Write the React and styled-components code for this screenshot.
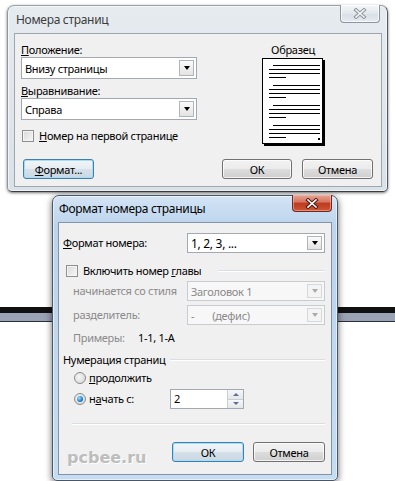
import styled, { createGlobalStyle, css } from "styled-components";

const GlobalStyle = createGlobalStyle`
  html, body {
    margin: 0;
    padding: 0;
    background: #fff;
  }
  body {
    font-family: "Noto Sans", "Open Sans", sans-serif;
    font-size: 11px;
    letter-spacing: -0.3px;
    color: #000;
  }
`;

const Page = styled.div`
  width: 395px;
  height: 481px;
  padding-top: 5px;
  box-sizing: border-box;
  overflow: hidden;
`;

const Lower = styled.div`
  padding-top: 3px;
  background: linear-gradient(
    to bottom,
    transparent 115px,
    #111 115px,
    #111 121px,
    #9aa2b6 121px,
    #9aa2b6 129px,
    #2c2f36 129px,
    #2c2f36 130px,
    transparent 130px
  );
`;

const Window = styled.div`
  box-sizing: border-box;
  width: ${(p) => p.$width}px;
  margin-left: ${(p) => p.$left}px;
  border: 1px solid;
  border-radius: 7px 7px 5px 5px;
  ${(p) =>
    p.$active
      ? css`
          border-color: #4a5766;
          background: linear-gradient(#d3e4f5, #bcd4ec 30px, #c6dcf1);
          box-shadow: inset 0 0 0 1px rgba(255, 255, 255, 0.55),
            0 2px 7px rgba(0, 0, 0, 0.6);
          padding: 0 5px 5px 5px;
        `
      : css`
          border-color: #9aa1a9 #55595e #3a3c40 #8e959c;
          background: linear-gradient(#e6ebf0, #dae1e8);
          box-shadow: inset 0 0 0 1px rgba(255, 255, 255, 0.6),
            0 1px 3px rgba(0, 0, 0, 0.55);
          padding: 0 5px 4px 6px;
        `}
`;

const TitleBar = styled.div`
  display: flex;
  justify-content: space-between;
  align-items: ${(p) => (p.$active ? "center" : "flex-start")};
  height: ${(p) => (p.$active ? 26 : 27)}px;
`;

const Title = styled.span`
  padding-left: ${(p) => (p.$active ? 1 : 2)}px;
  padding-top: ${(p) => (p.$active ? 0 : 6)}px;
  font-size: 12px;
  line-height: 16px;
  color: ${(p) => (p.$active ? "#000" : "#3c3c3c")};
`;

const CloseButton = styled.div`
  align-self: flex-start;
  box-sizing: border-box;
  width: 40px;
  height: ${(p) => (p.$active ? 17 : 18)}px;
  margin-top: -1px;
  margin-right: ${(p) => (p.$active ? 0 : 2)}px;
  border-radius: 0 0 4px 4px;
  display: flex;
  align-items: center;
  justify-content: center;
  ${(p) =>
    p.$active
      ? css`
          border: 1px solid #6d2a22;
          border-top: none;
          background: linear-gradient(#e8a493, #d5735d 45%, #bd3a1e 50%, #cc5534 100%);
          box-shadow: inset 0 0 0 1px rgba(255, 200, 180, 0.5);
        `
      : css`
          border: 1px solid #8d959e;
          border-top: none;
          background: linear-gradient(#f4f6f8, #e3e8ed 50%, #d8dee5 51%, #e6ebf0);
          box-shadow: inset 0 0 0 1px rgba(255, 255, 255, 0.7);
        `}
`;

const Client = styled.div`
  background: #f0f0f0;
  border: 1px solid ${(p) => (p.$active ? "#8194a9" : "#9ea6ae")};
  padding: ${(p) => p.$pad};
`;

/* ---------- common controls ---------- */

const U = styled.span`
  text-decoration: underline;
  text-underline-offset: 1px;
`;

const Label = styled.span`
  display: block;
  line-height: 14px;
  white-space: nowrap;
  color: ${(p) => (p.$disabled ? "#8a8a8a" : "#000")};
`;

const Select = styled.div`
  box-sizing: border-box;
  display: flex;
  align-items: center;
  height: ${(p) => p.$h}px;
  padding-left: 3px;
  border: 1px solid ${(p) => (p.$disabled ? "#c8ccd1" : "#a3a9b0")};
  background: ${(p) => (p.$disabled ? "#f7f7f7" : "#fff")};
  color: ${(p) => (p.$disabled ? "#8a8a8a" : "#000")};
`;

const SelectText = styled.span`
  flex: 1;
  white-space: pre;
  font-size: ${(p) => p.$size || 11}px;
`;

const DropButton = styled.span`
  box-sizing: border-box;
  width: 15px;
  align-self: stretch;
  margin: 2px 2px 2px 0;
  border: 1px solid ${(p) => (p.$disabled ? "#d6d9dc" : "#b0b5ba")};
  background: ${(p) =>
    p.$disabled ? "#f4f4f4" : "linear-gradient(#fbfbfb, #e3e3e3)"};
  display: flex;
  align-items: center;
  justify-content: center;
  &::after {
    content: "";
    border-left: 3.5px solid transparent;
    border-right: 3.5px solid transparent;
    border-top: 4px solid ${(p) => (p.$disabled ? "#a9a9a9" : "#000")};
  }
`;

const CheckRow = styled.div`
  display: flex;
  align-items: center;
  gap: ${(p) => p.$gap}px;
  height: 14px;
  margin-top: ${(p) => p.$mt}px;
  padding-left: ${(p) => p.$indent}px;
`;

const CheckBox = styled.span`
  box-sizing: border-box;
  flex: none;
  width: 12px;
  height: 12px;
  border: 1px solid #8e8f8f;
  background: linear-gradient(135deg, #d9d9d9, #f7f7f7);
  box-shadow: inset 0 0 0 1px #f4f4f4;
`;

const Radio = styled.span`
  box-sizing: border-box;
  flex: none;
  width: 12px;
  height: 12px;
  border-radius: 50%;
  border: 1px solid #8b8b8b;
  background: radial-gradient(circle at 40% 40%, #f6f6f6, #d3d3d3);
  display: flex;
  align-items: center;
  justify-content: center;
  &::after {
    content: "";
    display: ${(p) => (p.$checked ? "block" : "none")};
    width: 6px;
    height: 6px;
    border-radius: 50%;
    background: radial-gradient(circle at 35% 35%, #9fe0ff, #1b7fd0 60%, #0a4d8f);
  }
`;

const Button = styled.div`
  box-sizing: border-box;
  width: ${(p) => p.$w}px;
  height: 20px;
  border-radius: 3px;
  display: flex;
  align-items: center;
  justify-content: center;
  color: #000;
  ${(p) =>
    p.$focus
      ? css`
          border: 1px solid #3c7fb1;
          background: linear-gradient(#f0f5f8, #e6edf2 50%, #d6e1e9 51%, #cad8e3);
          box-shadow: inset 0 0 0 1px #a8dcf6;
        `
      : css`
          border: 1px solid #707070;
          background: linear-gradient(#f2f2f2, #ebebeb 50%, #dddddd 51%, #cfcfcf);
          box-shadow: inset 0 0 0 1px rgba(255, 255, 255, 0.75);
        `}
`;

const EtchedLine = styled.span`
  flex: 1;
  height: 0;
  border-top: 1px solid #d5dfe5;
  border-bottom: 1px solid #fff;
`;

/* ---------- dialog 1 ---------- */

const Top = styled.div`
  display: flex;
`;

const LeftCol = styled.div`
  width: 176px;
`;

const FieldLabel = styled(Label)`
  margin-top: ${(p) => p.$mt || 0}px;
`;

const SampleCol = styled.div`
  width: 80px;
  margin-left: 56px;
  display: flex;
  flex-direction: column;
  align-items: center;
`;

const ButtonRow = styled.div`
  display: flex;
  align-items: center;
  justify-content: space-between;
  margin-top: ${(p) => p.$mt}px;
`;

const ButtonGroup = styled.div`
  display: flex;
  gap: ${(p) => p.$gap}px;
`;

/* ---------- dialog 2 ---------- */

const FieldRow = styled.div`
  display: grid;
  grid-template-columns: ${(p) => p.$label}px 1fr;
  align-items: center;
  margin-top: ${(p) => p.$mt}px;
  padding-left: ${(p) => p.$indent || 0}px;
`;

const HeadRow = styled.div`
  display: flex;
  align-items: center;
  gap: 5px;
  height: 14px;
  margin-top: ${(p) => p.$mt}px;
`;

const RadioRow = styled.div`
  display: grid;
  grid-template-columns: 96px auto;
  align-items: center;
  margin-top: ${(p) => p.$mt}px;
  padding-left: 11px;
  min-height: 14px;
`;

const RadioLabel = styled.div`
  display: flex;
  align-items: center;
  gap: 3px;
`;

const Spin = styled.div`
  box-sizing: border-box;
  width: 74px;
  height: 20px;
  display: flex;
  border: 1px solid #a3a9b0;
  background: #fff;
`;

const SpinValue = styled.span`
  flex: 1;
  padding-left: 3px;
  line-height: 18px;
`;

const SpinButtons = styled.div`
  width: 15px;
  display: flex;
  flex-direction: column;
  border-left: 1px solid #c9ced3;
`;

const SpinButton = styled.span`
  flex: 1;
  display: flex;
  align-items: center;
  justify-content: center;
  background: linear-gradient(#f6f7f8, #e4e7ea);
  & + & {
    border-top: 1px solid #c9ced3;
  }
  &::after {
    content: "";
    border-left: 3px solid transparent;
    border-right: 3px solid transparent;
    ${(p) =>
      p.$up
        ? "border-bottom: 3px solid #5b6f93;"
        : "border-top: 3px solid #5b6f93;"}
  }
`;

const Divider = styled.div`
  margin: 14px 0 0 9px;
  height: 0;
  border-top: 1px solid #d5dfe5;
  border-bottom: 1px solid #fff;
`;

const Watermark = styled.span`
  padding-left: 4px;
  font-family: "DejaVu Sans", "Noto Sans", sans-serif;
  font-weight: bold;
  font-size: 16px;
  letter-spacing: 0;
  line-height: 18px;
  margin-top: 12px;
  color: #bdbdbd;
  text-shadow: 1px 1px 0 #fff;
`;

const CloseGlyph = ({ active }) => (
  <svg width="14" height="11" viewBox="0 0 14 11">
    <path
      d="M3 2 L11 9 M11 2 L3 9"
      stroke={active ? "#4a1810" : "#8c949c"}
      strokeWidth="3.6"
      strokeLinecap="square"
    />
    <path
      d="M3 2 L11 9 M11 2 L3 9"
      stroke={active ? "#fff" : "#f3f5f7"}
      strokeWidth="1.6"
      strokeLinecap="square"
    />
  </svg>
);

const SamplePage = () => {
  const groups = [7, 27, 47, 67];
  return (
    <svg width="63" height="88" viewBox="0 0 63 88" style={{ marginTop: 1 }}>
      <rect x="2" y="2" width="61" height="86" fill="#000" />
      <rect x="0.5" y="0.5" width="60" height="85" fill="#fff" stroke="#000" />
      {groups.map((g) => (
        <g key={g} stroke="#000" strokeWidth="1">
          <line x1="11" x2="58" y1={g + 0.5} y2={g + 0.5} />
          <line x1="7" x2="58" y1={g + 4.5} y2={g + 4.5} />
          <line x1="7" x2="58" y1={g + 8.5} y2={g + 8.5} />
          <line x1="7" x2="24" y1={g + 12.5} y2={g + 12.5} />
        </g>
      ))}
      <rect x="56" y="80" width="2" height="2" fill="#000" />
    </svg>
  );
};

export default function App() {
  return (
    <>
      <GlobalStyle />
      <Page>
        <Window $width={381} $left={7}>
          <TitleBar>
            <Title>Номера страниц</Title>
            <CloseButton>
              <CloseGlyph />
            </CloseButton>
          </TitleBar>
          <Client $pad="9px 8px 7px 6px">
            <Top>
              <LeftCol>
                <FieldLabel>
                  <U>П</U>оложение:
                </FieldLabel>
                <Select $h={22}>
                  <SelectText>Внизу страницы</SelectText>
                  <DropButton />
                </Select>
                <FieldLabel $mt={5}>
                  <U>В</U>ыравнивание:
                </FieldLabel>
                <Select $h={22}>
                  <SelectText>Справа</SelectText>
                  <DropButton />
                </Select>
                <CheckRow $mt={9} $indent={1} $gap={5}>
                  <CheckBox />
                  <Label>
                    <U>Н</U>омер на первой странице
                  </Label>
                </CheckRow>
              </LeftCol>
              <SampleCol>
                <Label>Образец</Label>
                <SamplePage />
              </SampleCol>
            </Top>
            <ButtonRow $mt={13}>
              <Button $w={71} $focus style={{ marginLeft: 2 }}>
                <span>
                  <U>Ф</U>ормат...
                </span>
              </Button>
              <ButtonGroup $gap={10}>
                <Button $w={70}>ОК</Button>
                <Button $w={71}>Отмена</Button>
              </ButtonGroup>
            </ButtonRow>
          </Client>
        </Window>

        <Lower>
          <Window $width={286} $left={52} $active>
            <TitleBar $active>
              <Title $active>Формат номера страницы</Title>
              <CloseButton $active>
                <CloseGlyph active />
              </CloseButton>
            </TitleBar>
            <Client $active $pad="10px 6px 7px 4px">
              <FieldRow $label={124} $mt={0}>
                <Label>
                  <U>Ф</U>ормат номера:
                </Label>
                <Select $h={20}>
                  <SelectText $size={12}>1, 2, 3, ...</SelectText>
                  <DropButton />
                </Select>
              </FieldRow>
              <CheckRow $mt={11} $indent={3} $gap={5}>
                <CheckBox />
                <Label>
                  Включить номер <U>г</U>лавы
                </Label>
                <EtchedLine style={{ marginLeft: 12 }} />
              </CheckRow>
              <FieldRow $label={114} $indent={10} $mt={3}>
                <Label $disabled>начинается со стиля</Label>
                <Select $h={20} $disabled>
                  <SelectText>Заголовок 1</SelectText>
                  <DropButton $disabled />
                </Select>
              </FieldRow>
              <FieldRow $label={114} $indent={10} $mt={4}>
                <Label $disabled>разделитель:</Label>
                <Select $h={20} $disabled>
                  <SelectText>{"-       (дефис)"}</SelectText>
                  <DropButton $disabled />
                </Select>
              </FieldRow>
              <FieldRow $label={65} $indent={10} $mt={6}>
                <Label $disabled>Примеры:</Label>
                <Label>1-1, 1-A</Label>
              </FieldRow>
              <HeadRow $mt={8}>
                <Label>Нумерация страниц</Label>
                <EtchedLine />
              </HeadRow>
              <RadioRow $mt={4}>
                <RadioLabel>
                  <Radio />
                  <Label>
                    <U>п</U>родолжить
                  </Label>
                </RadioLabel>
              </RadioRow>
              <RadioRow $mt={4}>
                <RadioLabel>
                  <Radio $checked />
                  <Label>
                    н<U>а</U>чать с:
                  </Label>
                </RadioLabel>
                <Spin>
                  <SpinValue>2</SpinValue>
                  <SpinButtons>
                    <SpinButton $up />
                    <SpinButton />
                  </SpinButtons>
                </Spin>
              </RadioRow>
              <Divider />
              <ButtonRow $mt={12}>
                <Watermark>pcbee.ru</Watermark>
                <ButtonGroup $gap={9}>
                  <Button $w={72} $focus>
                    ОК
                  </Button>
                  <Button $w={72}>Отмена</Button>
                </ButtonGroup>
              </ButtonRow>
            </Client>
          </Window>
        </Lower>
      </Page>
    </>
  );
}
